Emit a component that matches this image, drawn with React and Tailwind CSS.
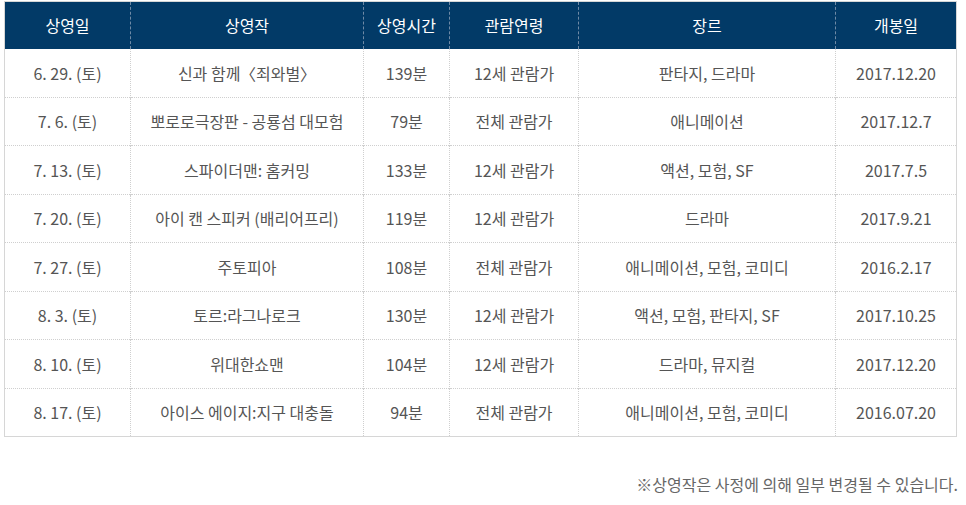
import React from "react";

const rows = [
  ["6. 29. (토)", "TITLE1", "139분", "12세 관람가", "판타지, 드라마", "2017.12.20"],
  ["7. 6. (토)", "뽀로로극장판 - 공룡섬 대모험", "79분", "전체 관람가", "애니메이션", "2017.12.7"],
  ["7. 13. (토)", "스파이더맨: 홈커밍", "133분", "12세 관람가", "액션, 모험, SF", "2017.7.5"],
  ["7. 20. (토)", "아이 캔 스피커 (배리어프리)", "119분", "12세 관람가", "드라마", "2017.9.21"],
  ["7. 27. (토)", "주토피아", "108분", "전체 관람가", "애니메이션, 모험, 코미디", "2016.2.17"],
  ["8. 3. (토)", "토르:라그나로크", "130분", "12세 관람가", "액션, 모험, 판타지, SF", "2017.10.25"],
  ["8. 10. (토)", "위대한쇼맨", "104분", "12세 관람가", "드라마, 뮤지컬", "2017.12.20"],
  ["8. 17. (토)", "아이스 에이지:지구 대충돌", "94분", "전체 관람가", "애니메이션, 모험, 코미디", "2016.07.20"],
];

const heads = ["상영일", "상영작", "상영시간", "관람연령", "장르", "개봉일"];
const widths = ["w-[126px]", "w-[233px]", "w-[86px]", "w-[129px]", "w-[257px]", "w-[121px]"];

function Cell({ c }) {
  if (c === "TITLE1") {
    return (
      <>
        신과 함께<span className="[word-spacing:-4px]"> 〈죄와벌〉</span>
      </>
    );
  }
  return c;
}

export default function App() {
  return (
    <div
      className="w-[966px] h-[505px] bg-white pl-[4px] pt-[1px]"
      style={{ fontFamily: '"Noto Sans CJK KR", "Noto Sans", sans-serif' }}
    >
      <table className="w-[952px] border-collapse table-fixed border border-[#d6d6d6]">
        <thead>
          <tr className="bg-[#023a67] h-[47px]">
            {heads.map((h, i) => (
              <th
                key={i}
                className={`${widths[i]} font-normal text-[16px] text-white text-center p-0 ${i > 0 ? "border-l border-dashed border-l-[#6f8aa6]" : ""}`}
              >
                {h}
              </th>
            ))}
          </tr>
        </thead>
        <tbody>
          {rows.map((r, ri) => (
            <tr key={ri} className={`h-[48.5px] ${ri > 0 ? "border-t border-dotted border-t-[#cfcfcf]" : ""}`}>
              {r.map((c, ci) => (
                <td
                  key={ci}
                  className={`text-center text-[16px] text-[#555] p-0 ${ci > 0 ? "border-l border-dotted border-l-[#cfcfcf]" : ""}`}
                >
                  <Cell c={c} />
                </td>
              ))}
            </tr>
          ))}
        </tbody>
      </table>
      <div className="w-[954px] text-right text-[16px] text-[#666] mt-[35px]">
        ※상영작은 사정에 의해 일부 변경될 수 있습니다.
      </div>
    </div>
  );
}
